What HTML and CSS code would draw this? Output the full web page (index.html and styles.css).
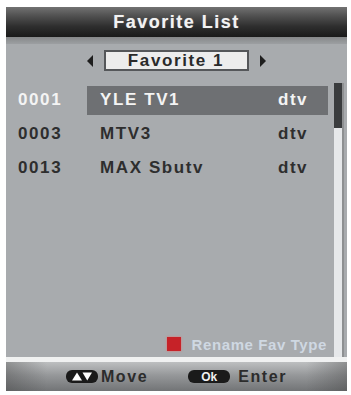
FILE: index.html
```html
<!DOCTYPE html>
<html>
<head>
<meta charset="utf-8">
<link rel="stylesheet" href="styles.css">
</head>
<body>
<div class="screen">
  <div class="header">Favorite List</div>
  <div class="band"></div>
  <div class="body">
    <div class="selector">
      <span class="arrow arrow-left"></span>
      <div class="selbox">Favorite 1</div>
      <span class="arrow arrow-right"></span>
    </div>
    <div class="listarea">
      <div class="list">
        <div class="row active"><span class="num">0001</span><span class="main"><span class="name">YLE TV1</span><span class="type">dtv</span></span></div>
        <div class="row"><span class="num">0003</span><span class="main"><span class="name">MTV3</span><span class="type">dtv</span></span></div>
        <div class="row"><span class="num">0013</span><span class="main"><span class="name">MAX Sbutv</span><span class="type">dtv</span></span></div>
        <div class="spacer"></div>
        <div class="hint"><span class="red"></span><span class="hint-text">Rename Fav Type</span></div>
      </div>
      <div class="scrollbar"><div class="thumb"></div></div>
    </div>
  </div>
  <div class="footer">
    <span class="key key-arrows"><svg width="22" height="9" viewBox="0 0 22 9"><polygon points="1,8.5 6,0.5 11,8.5" fill="#fff"/><polygon points="11.5,0.5 21,0.5 16.25,8.5" fill="#fff"/></svg></span>
    <span class="label label-move">Move</span>
    <span class="key key-ok">Ok</span>
    <span class="label label-enter">Enter</span>
  </div>
</div>
</body>
</html>
```
FILE: styles.css
```css
* { box-sizing: border-box; }
html, body { margin: 0; padding: 0; background: #fff; }
body { width: 351px; height: 395px; overflow: hidden; font-family: "Liberation Sans", Arial, sans-serif; }
.screen {
  margin: 7px 4px 0 6px;
  width: 341px;
  height: 384px;
  display: flex;
  flex-direction: column;
  background: #a8abae;
}
.header {
  height: 30px;
  background: linear-gradient(#727272 0%, #505050 30%, #2e2e2e 65%, #1a1a1a 100%);
  color: #f2f2f2;
  font-weight: bold;
  font-size: 18px;
  letter-spacing: 1.5px;
  text-align: center;
  line-height: 30px;
  text-shadow: 0 0 1px rgba(255,255,255,0.4);
}
.band { height: 7px; background: linear-gradient(#868889, #9c9fa2); }
.body { flex: 1; display: flex; flex-direction: column; }
.selector {
  display: flex;
  align-items: center;
  justify-content: center;
  gap: 11px;
  height: 21px;
  margin-top: 6px;
  padding-right: 1px;
}
.arrow { width: 0; height: 0; border-top: 6px solid transparent; border-bottom: 6px solid transparent; }
.arrow-left { border-right: 6px solid #1e1e1e; }
.arrow-right { border-left: 6px solid #1e1e1e; }
.selbox {
  width: 145px;
  height: 21px;
  background: #ededed;
  border: 2px solid #55575a;
  color: #2a2a2a;
  font-weight: bold;
  font-size: 17px;
  line-height: 17px;
  text-align: center;
  letter-spacing: 1.6px;
}
.listarea { flex: 1; display: flex; padding: 12px 3px 0 0; }
.list { flex: 1; display: flex; flex-direction: column; }
.row {
  display: flex;
  align-items: center;
  height: 34px;
  font-weight: bold;
  font-size: 17px;
  color: #2e2e2e;
  letter-spacing: 1.6px;
}
.row .num { width: 81px; padding-left: 12px; }
.row .main {
  flex: 1;
  display: flex;
  align-items: center;
  height: 29px;
  padding-left: 13px;
  padding-right: 20px;
}
.row .name { flex: 1; }
.row .type { letter-spacing: 1.5px; }
.row.active { color: #f4f4f4; }
.row.active .main { background: #6e7073; }
.spacer { flex: 1; }
.hint {
  display: flex;
  align-items: center;
  justify-content: flex-end;
  gap: 11px;
  height: 16px;
  margin-bottom: 5px;
  padding-right: 1px;
}
.red { width: 14px; height: 14px; background: #c62228; box-shadow: 0 0 2px #e87070; }
.hint-text { color: #cfd8e2; font-size: 15px; font-weight: bold; letter-spacing: 0.6px; }
.scrollbar {
  width: 10px;
  margin-left: 6px;
  background: #e6e8ea;
  border-right: 2px solid #8e9092;
  display: flex;
  flex-direction: column;
}
.thumb { height: 45px; background: #3a3c3e; }
.footer {
  height: 34px;
  border-top: 5px solid #f0f1f1;
  background:
    linear-gradient(90deg, rgba(60,60,60,0.35) 0%, rgba(0,0,0,0) 12%, rgba(0,0,0,0) 88%, rgba(60,60,60,0.35) 100%),
    linear-gradient(#bdbfc0 0%, #96989a 45%, #727476 100%);
  display: flex;
  align-items: center;
  justify-content: center;
}
.key {
  display: inline-flex;
  align-items: center;
  justify-content: center;
  height: 13px;
  background: #1a1a1a;
  border-radius: 6px;
  color: #f0f0f0;
  font-weight: bold;
  font-size: 12px;
}
.key-arrows { width: 32px; }
.key-ok { width: 42px; margin-left: 40px; }
.label { font-weight: bold; font-size: 16px; color: #2c2c2c; letter-spacing: 1.6px; }
.label-move { margin-left: 3px; }
.label-enter { margin-left: 8px; }
```
